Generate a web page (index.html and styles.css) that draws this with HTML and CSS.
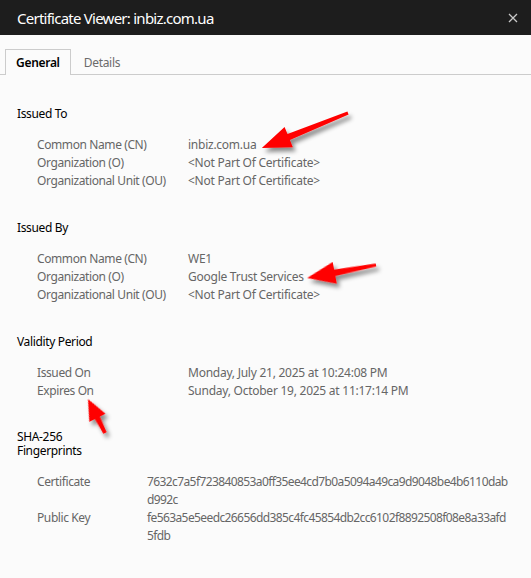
FILE: index.html
```html
<!DOCTYPE html>
<html>
<head>
<meta charset="utf-8">
<link rel="stylesheet" href="styles.css">
</head>
<body>
<div class="dialog">
  <div class="titlebar">
    <span class="title">Certificate Viewer: inbiz.com.ua</span>
    <svg class="close" width="10" height="10" viewBox="0 0 10 10"><path d="M1 1L9 9M9 1L1 9" stroke="#c8c8c8" stroke-width="1.3"/></svg>
  </div>
  <div class="tabs">
    <div class="tab active">General</div>
    <div class="tab">Details</div>
  </div>
  <div class="content">
    <section class="section">
      <div class="heading">Issued To</div>
      <div class="rows">
        <div class="label">Common Name (CN)</div><div class="value">inbiz.com.ua</div>
        <div class="label">Organization (O)</div><div class="value">&lt;Not Part Of Certificate&gt;</div>
        <div class="label">Organizational Unit (OU)</div><div class="value">&lt;Not Part Of Certificate&gt;</div>
      </div>
    </section>
    <section class="section">
      <div class="heading">Issued By</div>
      <div class="rows">
        <div class="label">Common Name (CN)</div><div class="value">WE1</div>
        <div class="label">Organization (O)</div><div class="value">Google Trust Services</div>
        <div class="label">Organizational Unit (OU)</div><div class="value">&lt;Not Part Of Certificate&gt;</div>
      </div>
    </section>
    <section class="section">
      <div class="heading">Validity Period</div>
      <div class="rows">
        <div class="label">Issued On</div><div class="value">Monday, July 21, 2025 at 10:24:08 PM</div>
        <div class="label">Expires On</div><div class="value">Sunday, October 19, 2025 at 11:17:14 PM</div>
      </div>
    </section>
    <section class="section fp">
      <div class="heading">SHA-256<br>Fingerprints</div>
      <div class="rows narrow">
        <div class="label">Certificate</div><div class="value hash">7632c7a5f723840853a0ff35ee4cd7b0a5094a49ca9d9048be4b6110dab<br>d992c</div>
        <div class="label">Public Key</div><div class="value hash">fe563a5e5eedc26656dd385c4fc45854db2cc6102f8892508f08e8a33afd<br>5fdb</div>
      </div>
    </section>
  </div>
</div>
<svg class="arrows" width="531" height="578" viewBox="0 0 531 578">
  <defs>
    <filter id="sh" x="-30%" y="-30%" width="160%" height="160%">
      <feDropShadow dx="3" dy="4" stdDeviation="2" flood-color="#000" flood-opacity="0.45"/>
    </filter>
  </defs>
  <g filter="url(#sh)" fill="#ff0000">
    <g transform="translate(348 113) rotate(157.9)">
      <polygon points="0,-1.6 64,-3.2 64,-11 93,0 64,11 64,3.2 0,1.6"/>
    </g>
    <g transform="translate(376 265) rotate(169.3)">
      <polygon points="0,-1.6 42,-3.2 42,-11 70,0 42,11 42,3.2 0,1.6"/>
    </g>
    <g transform="translate(105 433) rotate(243.4)">
      <polygon points="0,-1.8 17,-2.8 17,-9 38,0 17,9 17,2.8 0,1.8"/>
    </g>
  </g>
</svg>
</body>
</html>
```

FILE: styles.css
```css
html, body {
  margin: 0;
  padding: 0;
  background: #fbfbfb;
}
body {
  width: 531px;
  height: 578px;
  overflow: hidden;
  position: relative;
  font-family: "Noto Sans", "Open Sans", sans-serif;
}
.dialog {
  display: flex;
  flex-direction: column;
}
.titlebar {
  height: 35px;
  background: #1d1d1d;
  display: flex;
  align-items: center;
  justify-content: space-between;
  padding: 0 13px 0 17px;
}
.title {
  color: #ffffff;
  font-size: 15px;
  letter-spacing: -0.75px;
  padding-top: 1px;
}
.close {
  display: block;
}
.tabs {
  display: flex;
  margin-top: 14px;
  padding-left: 5px;
  border-bottom: 1px solid #cccccc;
  height: 25px;
}
.tab {
  font-size: 12px;
  letter-spacing: -0.3px;
  line-height: 26px;
  padding: 0 12px;
  color: #6b6b6b;
  border: 1px solid transparent;
  border-bottom: none;
}
.tab.active {
  color: #000000;
  font-weight: 600;
  border-color: #cccccc;
  background: #fbfbfb;
  height: 25px;
  margin-bottom: -1px;
  padding: 0 10px;
}
.content {
  padding: 30px 17px 0 17px;
  display: flex;
  flex-direction: column;
  gap: 29px;
}
.heading {
  font-size: 12px;
  letter-spacing: -0.35px;
  line-height: 18px;
  color: #000000;
}
.fp {
  margin-top: 1px;
}
.fp .heading {
  line-height: 14px;
}
.rows {
  margin-top: 13px;
  padding-left: 20px;
  display: grid;
  grid-template-columns: 151px 1fr;
  font-size: 12px;
  letter-spacing: -0.4px;
  line-height: 18px;
  color: #666666;
}
.rows.narrow {
  margin-top: 15px;
  grid-template-columns: 110px 1fr;
}
.value {
  white-space: nowrap;
  letter-spacing: -0.25px;
}
.value.hash {
  letter-spacing: -0.6px;
}
.arrows {
  position: absolute;
  left: 0;
  top: 0;
  pointer-events: none;
}
```
